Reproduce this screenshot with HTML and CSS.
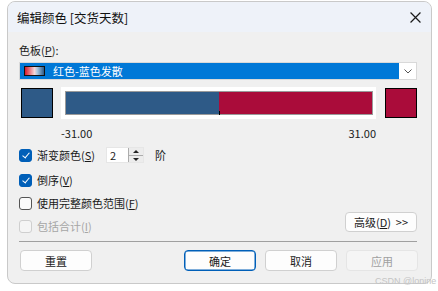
FILE: index.html
```html
<!DOCTYPE html>
<html lang="zh-CN">
<head>
  <meta charset="UTF-8" />
  <title>编辑颜色 [交货天数]</title>
  <link rel="stylesheet" href="styles.css">
</head>
<body>
  <div class="dialog">
    <!-- Title bar -->
    <div class="titlebar">
      <span class="title">编辑颜色 [交货天数]</span>
      <svg class="close" viewBox="0 0 10 10" width="11" height="11">
        <path d="M0.5,0.5 L9.5,9.5 M9.5,0.5 L0.5,9.5" stroke="#1a1a1a" stroke-width="1.1" fill="none"/>
      </svg>
    </div>

    <div class="content">
      <div class="field-label">色板(<u>P</u>):</div>

      <div class="combo">
        <div class="combo-value">
          <span class="palette-swatch"></span>
          <span>红色-蓝色发散</span>
        </div>
        <div class="combo-arrow">
          <svg viewBox="0 0 8 5" width="8" height="5">
            <path d="M0.5,0.5 L4,4 L7.5,0.5" stroke="#555" stroke-width="1" fill="none"/>
          </svg>
        </div>
      </div>

      <!-- Colour range -->
      <div class="color-row">
        <div class="end-swatch blue"></div>
        <div class="bar-frame">
          <div class="bar">
            <div class="bar-part blue" style="width: 50%"></div>
            <div class="bar-part red" style="width: 50%"></div>
            <span class="tick"></span>
          </div>
        </div>
        <div class="end-swatch red"></div>
      </div>
      <div class="range-labels">
        <span>-31.00</span>
        <span>31.00</span>
      </div>

      <!-- Options -->
      <div class="options">
        <div class="option-list">
          <div class="option">
            <span class="check checked"></span>
            <span>渐变颜色(<u>S</u>)</span>
            <div class="spinner">
              <span class="spin-value">2</span>
              <span class="spin-buttons">
                <span class="spin-up"></span>
                <span class="spin-down"></span>
              </span>
            </div>
            <span class="unit">阶</span>
          </div>
          <div class="option">
            <span class="check checked"></span>
            <span>倒序(<u>V</u>)</span>
          </div>
          <div class="option">
            <span class="check"></span>
            <span>使用完整颜色范围(<u>F</u>)</span>
          </div>
          <div class="option disabled">
            <span class="check"></span>
            <span>包括合计(<u>I</u>)</span>
          </div>
        </div>
        <button class="btn advanced">高级(<u>D</u>)&nbsp; &gt;&gt;</button>
      </div>

      <div class="separator"></div>

      <div class="buttons">
        <button class="btn">重置</button>
        <div class="button-group">
          <button class="btn default">确定</button>
          <button class="btn">取消</button>
          <button class="btn" disabled>应用</button>
        </div>
      </div>
    </div>
  </div>
  <div class="watermark">CSDN @lonine</div>
</body>
</html>
```

FILE: styles.css
```css
* {
  margin: 0;
  padding: 0;
  box-sizing: border-box;
}
body {
  font-family: "Noto Sans CJK SC", "Noto Sans", sans-serif;
  font-size: 11px;
  color: #1a1a1a;
  background: #fff;
  width: 438px;
  height: 291px;
  overflow: hidden;
  position: relative;
}
u {
  text-decoration: underline;
  text-underline-offset: 1px;
}

/* Dialog frame */
.dialog {
  margin: 1px 0 0 7px;
  width: 425px;
  height: 283px;
  background: #f0f0f0;
  border: 1px solid #c9c9c9;
  border-radius: 8px;
  overflow: hidden;
}
.titlebar {
  height: 30px;
  background: #eef2f9;
  display: flex;
  align-items: center;
  justify-content: space-between;
  padding: 0 10px 0 9px;
}
.title {
  font-size: 12.5px;
  color: #111;
}
.close {
  display: block;
}

.content {
  padding: 0 14px 0 11px;
}
.field-label {
  margin-top: 10px;
  line-height: 16px;
}

/* Palette combo box */
.combo {
  margin-top: 4px;
  height: 18px;
  display: flex;
  background: #fff;
  border: 1px solid #d9d9d9;
}
.combo-value {
  flex: 1;
  background: #0078d7;
  color: #fff;
  display: flex;
  align-items: center;
  gap: 8px;
  padding-left: 4px;
}
.palette-swatch {
  width: 21px;
  height: 10px;
  border: 1px solid #111;
  background: linear-gradient(to right, #d7192a, #f4d6d8 50%, #a9c6df 65%, #2e5a87);
}
.combo-arrow {
  width: 17px;
  display: flex;
  align-items: center;
  justify-content: center;
}
.combo-arrow svg {
  display: block;
}

/* Colour range row */
.color-row {
  margin-top: 7px;
  height: 32px;
  display: flex;
  align-items: center;
}
.end-swatch {
  width: 32px;
  height: 30px;
  border: 1px solid #000;
}
.end-swatch.blue {
  margin-left: 2px;
  background: #2e5a87;
}
.end-swatch.red {
  margin-left: auto;
  background: #aa0c3a;
}
.bar-frame {
  margin-left: 8px;
  width: 315px;
  height: 32px;
  background: #fff;
  padding: 4px 3px 4px 4px;
}
.bar {
  height: 100%;
  display: flex;
  position: relative;
  border: 1px solid #9a9a9a;
}
.bar-part.blue {
  background: #2e5a87;
}
.bar-part.red {
  background: #aa0c3a;
}
.tick {
  position: absolute;
  left: 50%;
  bottom: -1px;
  width: 1px;
  height: 4px;
  background: #000;
}
.range-labels {
  margin: 7px 0 0 42px;
  width: 315px;
  display: flex;
  justify-content: space-between;
  line-height: 14px;
}

/* Checkbox options */
.options {
  margin-top: 6px;
  display: flex;
  justify-content: space-between;
  align-items: flex-end;
}
.option-list {
  display: flex;
  flex-direction: column;
  gap: 5px;
}
.option {
  height: 18px;
  display: flex;
  align-items: center;
  gap: 5px;
}
.option:nth-child(2) {
  margin-top: 2px;
}
.check {
  width: 13px;
  height: 13px;
  border: 1px solid #555;
  border-radius: 3px;
  background: #fbfbfb;
  position: relative;
}
.check.checked {
  background: #005fb8;
  border-color: #005fb8;
}
.check.checked::after {
  content: "";
  position: absolute;
  left: 3.5px;
  top: 1.5px;
  width: 3px;
  height: 6px;
  border: solid #fff;
  border-width: 0 1.2px 1.2px 0;
  transform: rotate(40deg);
}
.option.disabled {
  color: #a6a6a6;
}
.option.disabled .check {
  border-color: #cfcfcf;
  background: #f5f5f5;
}
.spinner {
  margin-left: 6px;
  height: 16px;
  display: flex;
  background: #fff;
  border: 1px solid #e6e6e6;
}
.spin-value {
  width: 21px;
  padding-left: 3px;
  line-height: 14px;
}
.spin-buttons {
  width: 15px;
  display: flex;
  flex-direction: column;
  border-left: 1px solid #adadad;
  background: #ececec;
}
.spin-up,
.spin-down {
  flex: 1;
  position: relative;
}
.spin-up {
  border-bottom: 1px solid #adadad;
}
.spin-up::after,
.spin-down::after {
  content: "";
  position: absolute;
  left: 4px;
  border-left: 3px solid transparent;
  border-right: 3px solid transparent;
}
.spin-up::after {
  top: 2px;
  border-bottom: 3px solid #222;
}
.spin-down::after {
  top: 2px;
  border-top: 3px solid #222;
}
.unit {
  margin-left: 6px;
}

/* Buttons */
.btn {
  font-family: inherit;
  font-size: 11px;
  color: #1a1a1a;
  width: 72px;
  height: 21px;
  background: #fdfdfd;
  border: 1px solid #d0d0d0;
  border-radius: 4px;
}
.btn.advanced {
  margin-bottom: 3px;
  height: 20px;
}
.btn.default {
  border-color: #005fb8;
  box-shadow: inset 0 0 0 0.5px #005fb8;
}
.btn:disabled {
  background: #f5f5f5;
  border-color: #e5e5e5;
  color: #a0a0a0;
}
.separator {
  margin-top: 6px;
  height: 1px;
  background: #a0a0a0;
}
.buttons {
  margin-top: 8px;
  display: flex;
  justify-content: space-between;
  padding-left: 1px;
}
.button-group {
  display: flex;
  gap: 9px;
  margin-right: -1px;
}

.watermark {
  position: absolute;
  left: 375px;
  top: 276px;
  font-family: "Liberation Sans", sans-serif;
  font-size: 9px;
  color: #c4c4c4;
  white-space: nowrap;
}
```
